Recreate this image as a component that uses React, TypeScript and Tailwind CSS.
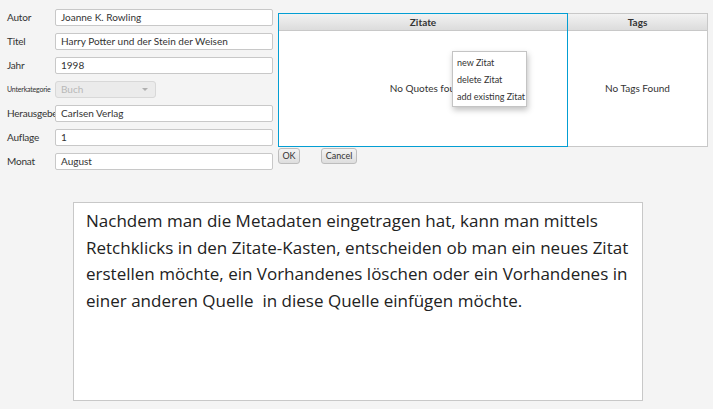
const fields: { label: string; value: string; small?: boolean; combo?: boolean }[] = [
  { label: "Autor", value: "Joanne K. Rowling" },
  { label: "Titel", value: "Harry Potter und der Stein der Weisen" },
  { label: "Jahr", value: "1998" },
  { label: "Unterkategorie", value: "Buch", small: true, combo: true },
  { label: "Herausgeber", value: "Carlsen Verlag" },
  { label: "Auflage", value: "1" },
  { label: "Monat", value: "August" },
];

function Field({ label, value, small, combo }: (typeof fields)[number]) {
  return (
    <div className="flex h-[17px] items-center">
      <span className={`w-[48px] shrink-0 whitespace-nowrap tracking-[-0.2px] text-[#333] ${small ? "text-[7px]" : "text-[10px]"}`}>{label}</span>
      {combo ? (
        <div className="flex h-full w-[101px] items-center justify-between rounded-[3px] border border-[#d8d8d8] bg-[#ebebeb] px-[5px] text-[10px] text-[#b8b8b8]">
          <span>Buch</span>
          <span className="mr-[2px] h-0 w-0 border-x-[3px] border-t-[3px] border-x-transparent border-t-[#b0b0b0]" />
        </div>
      ) : (
        <div className="flex h-full w-[218px] items-center rounded-[2px] border border-[#c8c8c8] bg-white px-[5px] text-[10px] text-[#333]">
          {value}
        </div>
      )}
    </div>
  );
}

export default function App() {
  return (
    <div className="relative h-[409px] w-[713px] overflow-hidden bg-[#f4f4f4] font-['Lato',sans-serif]">
      <div className="flex">
        <div className="flex flex-col gap-[7px] pl-[7px] pt-[9px]">
          {fields.map((f) => (
            <Field key={f.label} {...f} />
          ))}
        </div>

        <div className="ml-[5px] pt-[13px]">
          <div className="flex h-[134px] w-[430px]">
            <div className="flex w-[290px] flex-col border border-[#039ed3] bg-white">
              <div className="flex h-[17px] items-center justify-center border-b border-[#c8c8c8] bg-gradient-to-b from-[#f2f2f2] to-[#dcdcdc] text-[10px] font-bold text-[#333]">
                Zitate
              </div>
              <div className="flex flex-1 items-center justify-center pl-[10px] text-[10px] text-[#333]">No Quotes found</div>
            </div>
            <div className="flex flex-1 flex-col border border-l-0 border-[#c8c8c8] bg-white">
              <div className="flex h-[17px] items-center justify-center border-b border-[#c8c8c8] bg-gradient-to-b from-[#f2f2f2] to-[#dcdcdc] text-[10px] font-bold text-[#333]">
                Tags
              </div>
              <div className="flex flex-1 items-center justify-center text-[10px] text-[#333]">No Tags Found</div>
            </div>
          </div>
          <div className="mt-[1px] flex gap-[21px]">
            <button className="h-[16px] w-[22px] rounded-[3px] border border-[#bdbdbd] bg-gradient-to-b from-[#f4f4f4] to-[#dedede] text-[9px] text-[#333]">
              OK
            </button>
            <button className="h-[16px] w-[36px] rounded-[3px] border border-[#bdbdbd] bg-gradient-to-b from-[#f4f4f4] to-[#dedede] text-[9px] text-[#333]">
              Cancel
            </button>
          </div>
        </div>
      </div>

      <div className="absolute left-[452px] top-[51px] flex h-[56px] w-[75px] flex-col justify-center whitespace-nowrap border border-[#c4c4c4] bg-white pl-[4px] text-[9px] leading-[17px] text-[#333] shadow-[1px_3px_6px_rgba(0,0,0,0.25)]">
        <span>new Zitat</span>
        <span>delete Zitat</span>
        <span>add existing Zitat</span>
      </div>

      <div className="ml-[73px] mt-[32px] h-[199px] w-[570px] border border-[#c8c8c8] bg-white px-[12px] py-[5px] font-['Open_Sans',sans-serif] text-[17px] leading-[26.5px] text-[#222]">
        Nachdem man die Metadaten eingetragen hat, kann man mittels Retchklicks in den Zitate-Kasten, entscheiden ob man ein
        neues Zitat erstellen möchte, ein Vorhandenes löschen oder ein Vorhandenes in einer anderen Quelle&nbsp; in diese Quelle
        einfügen möchte.
      </div>
    </div>
  );
}
